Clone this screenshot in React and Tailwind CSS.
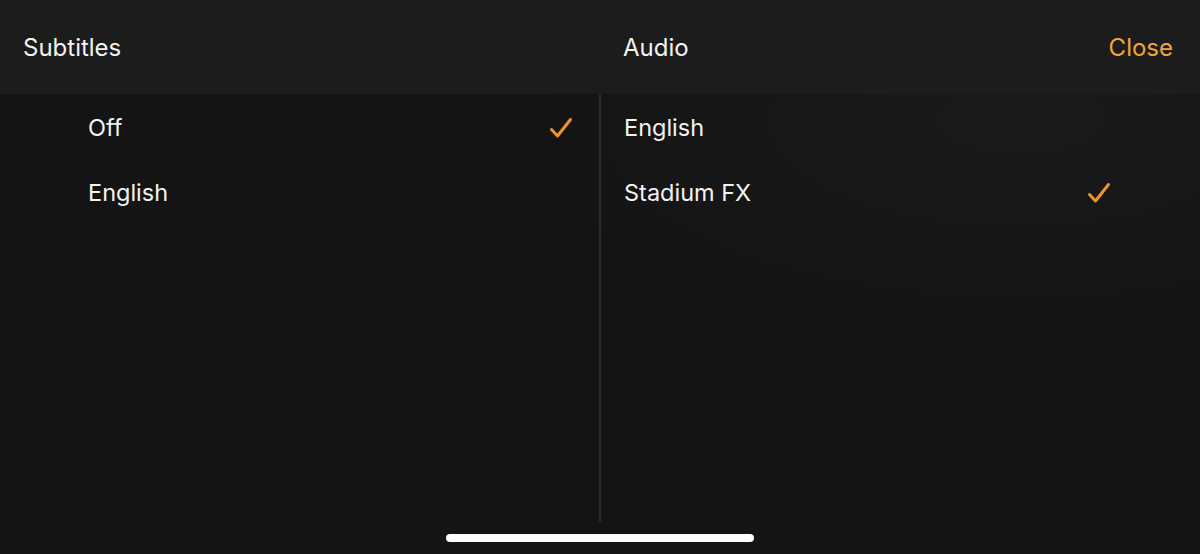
import React from "react";

function Check({ className }) {
  return (
    <svg viewBox="0 0 24 22" className={className} fill="none" stroke="#f0932f" strokeWidth="3" strokeLinecap="round" strokeLinejoin="round">
      <path d="M2.5 12.5 L8.5 19 L21.5 2.5" />
    </svg>
  );
}

function Row({ label, checked, left }) {
  return (
    <div className={`flex h-[65px] items-center justify-between ${left ? "pl-[88px] pr-[26px]" : "pl-[23px] pr-[89px]"}`}>
      <span className="text-[23.5px] text-[#f2f2f2]">{label}</span>
      {checked && <Check className="w-[24px] h-[22px]" />}
    </div>
  );
}

export default function App() {
  return (
    <div className="w-[1200px] h-[554px] bg-[#141414] flex flex-col overflow-hidden" style={{ fontFamily: "Inter, 'Noto Sans', sans-serif" }}>
      <div className="h-[94px] bg-[#1c1c1d] flex items-center shrink-0 pt-[2px]">
        <div className="w-[600px] pl-[23px] text-[24px] text-[#f2f2f2]">Subtitles</div>
        <div className="flex-1 flex justify-between items-center pl-[23px] pr-[27px]">
          <span className="text-[24px] text-[#f2f2f2]">Audio</span>
          <span className="text-[24px] text-[#f3a53a]">Close</span>
        </div>
      </div>
      <div className="flex flex-1 bg-[radial-gradient(ellipse_at_85%_5%,#1a1a1a_0%,#141414_35%)]">
        <div className="w-[599px] pt-[1px]">
          <Row label="Off" checked left />
          <Row label="English" left />
        </div>
        <div className="w-[2px] bg-[#2b2b2b] mb-[32px]" />
        <div className="flex-1 pt-[1px]">
          <Row label="English" />
          <Row label="Stadium FX" checked />
        </div>
      </div>
      <div className="h-[0px] relative">
        <div className="absolute left-[446px] top-[-20px] w-[308px] h-[8px] rounded-full bg-white" />
      </div>
    </div>
  );
}
